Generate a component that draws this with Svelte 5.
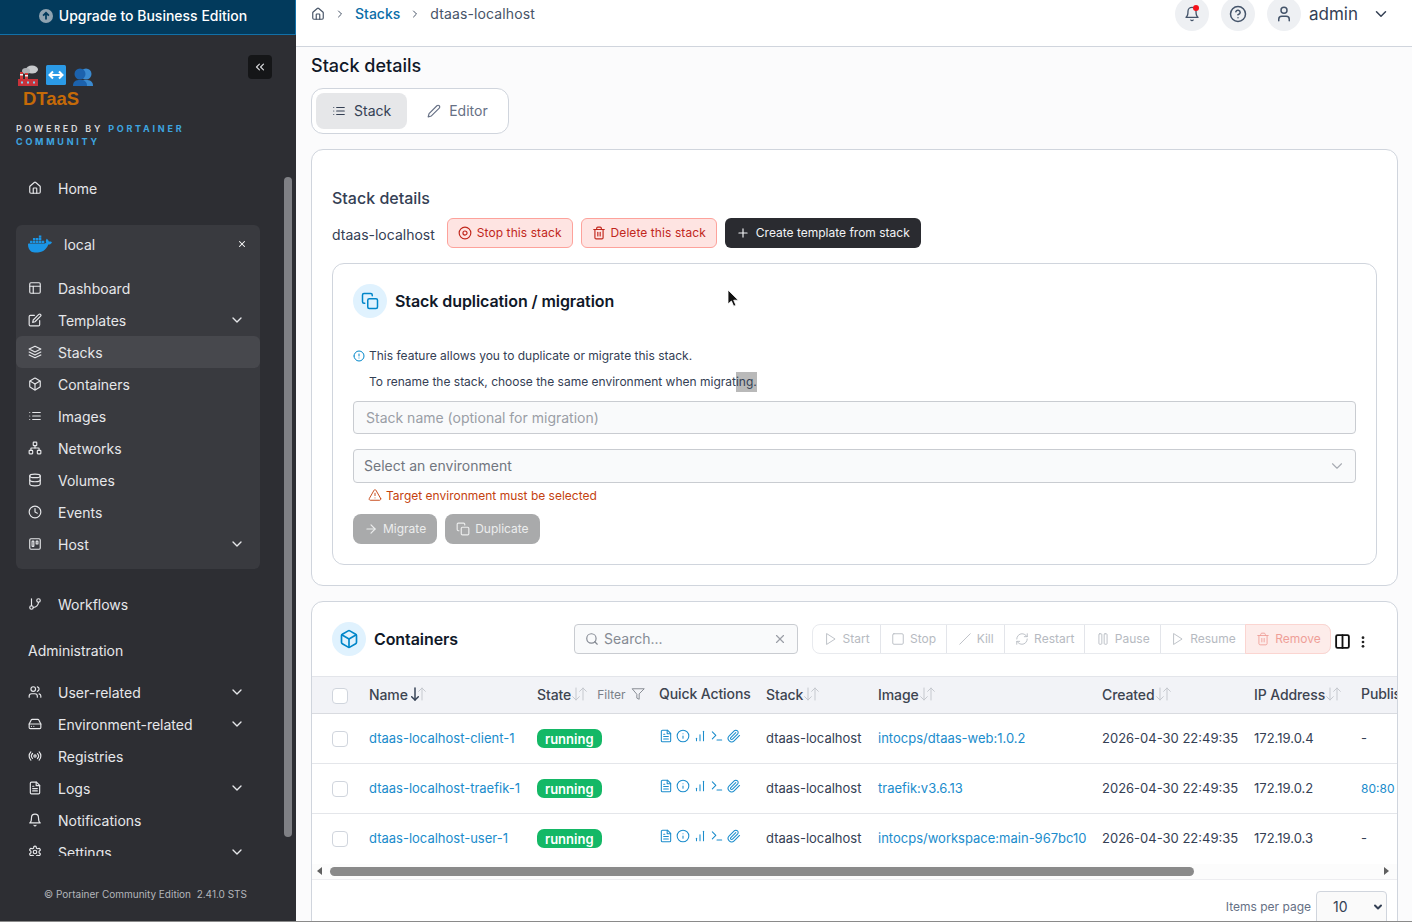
<script lang="ts">
	// circle and rect as path data, so every icon is just a list of d strings
	const c = (x: number, y: number, r: number) =>
		`M${x - r} ${y}a${r} ${r} 0 1 0 ${2 * r} 0a${r} ${r} 0 1 0 ${-2 * r} 0`;
	const r = (x: number, y: number, w: number, h: number, q = 2) =>
		`M${x + q} ${y}h${w - 2 * q}a${q} ${q} 0 0 1 ${q} ${q}v${h - 2 * q}a${q} ${q} 0 0 1 ${-q} ${q}h${-(w - 2 * q)}a${q} ${q} 0 0 1 ${-q} ${-q}v${-(h - 2 * q)}a${q} ${q} 0 0 1 ${q} ${-q}z`;

	const icons: Record<string, string[]> = {
		home: ['M15 21v-8a1 1 0 0 0-1-1h-4a1 1 0 0 0-1 1v8', 'M3 10a2 2 0 0 1 .709-1.528l7-5.999a2 2 0 0 1 2.582 0l7 5.999A2 2 0 0 1 21 10v9a2 2 0 0 1-2 2H5a2 2 0 0 1-2-2z'],
		layout: [r(3, 3, 18, 18), 'M3 9h18', 'M9 21V9'],
		edit: ['M11 4H4a2 2 0 0 0-2 2v14a2 2 0 0 0 2 2h14a2 2 0 0 0 2-2v-7', 'M18.5 2.5a2.121 2.121 0 0 1 3 3L12 15l-4 1 1-4 9.5-9.5z'],
		layers: ['M12 2 2 7l10 5 10-5-10-5z', 'M2 17l10 5 10-5', 'M2 12l10 5 10-5'],
		box: ['M21 8a2 2 0 0 0-1-1.73l-7-4a2 2 0 0 0-2 0l-7 4A2 2 0 0 0 3 8v8a2 2 0 0 0 1 1.73l7 4a2 2 0 0 0 2 0l7-4A2 2 0 0 0 21 16Z', 'm3.3 7 8.7 5 8.7-5', 'M12 22V12'],
		list: ['M8 6h13', 'M8 12h13', 'M8 18h13', 'M3 6h.01', 'M3 12h.01', 'M3 18h.01'],
		network: [r(16, 16, 6, 6, 1), r(2, 16, 6, 6, 1), r(9, 2, 6, 6, 1), 'M5 16v-3a1 1 0 0 1 1-1h12a1 1 0 0 1 1 1v3', 'M12 12V8'],
		database: ['M3 5c0-1.66 4-3 9-3s9 1.34 9 3-4 3-9 3-9-1.34-9-3z', 'M21 12c0 1.66-4 3-9 3s-9-1.34-9-3', 'M3 5v14c0 1.66 4 3 9 3s9-1.34 9-3V5'],
		clock: [c(12, 12, 10), 'M12 6v6l4 2'],
		host: [r(3, 3, 18, 18), r(7, 7, 3, 9, 0.5), r(14, 7, 3, 5, 0.5)],
		branch: ['M6 3v12', c(18, 6, 3), c(6, 18, 3), 'M18 9a9 9 0 0 1-9 9'],
		users: ['M16 21v-2a4 4 0 0 0-4-4H6a4 4 0 0 0-4 4v2', c(9, 7, 4), 'M22 21v-2a4 4 0 0 0-3-3.87', 'M16 3.13a4 4 0 0 1 0 7.75'],
		drive: ['M22 12H2', 'M5.45 5.11 2 12v6a2 2 0 0 0 2 2h16a2 2 0 0 0 2-2v-6l-3.45-6.89A2 2 0 0 0 16.76 4H7.24a2 2 0 0 0-1.79 1.11z', 'M6 16h.01', 'M10 16h.01'],
		radio: ['M4.9 19.1C1 15.2 1 8.8 4.9 4.9', 'M7.8 16.2c-2.3-2.3-2.3-6.1 0-8.5', c(12, 12, 2), 'M16.2 7.8c2.3 2.3 2.3 6.1 0 8.5', 'M19.1 4.9C23 8.8 23 15.1 19.1 19'],
		file: ['M14.5 2H6a2 2 0 0 0-2 2v16a2 2 0 0 0 2 2h12a2 2 0 0 0 2-2V7.5L14.5 2z', 'M14 2v6h6', 'M16 13H8', 'M16 17H8', 'M10 9H8'],
		bell: ['M6 8a6 6 0 0 1 12 0c0 7 3 9 3 9H3s3-2 3-9', 'M10.3 21a1.94 1.94 0 0 0 3.4 0'],
		settings: ['M12.22 2h-.44a2 2 0 0 0-2 2v.18a2 2 0 0 1-1 1.73l-.43.25a2 2 0 0 1-2 0l-.15-.08a2 2 0 0 0-2.73.73l-.22.38a2 2 0 0 0 .73 2.73l.15.1a2 2 0 0 1 1 1.72v.51a2 2 0 0 1-1 1.74l-.15.09a2 2 0 0 0-.73 2.73l.22.38a2 2 0 0 0 2.73.73l.15-.08a2 2 0 0 1 2 0l.43.25a2 2 0 0 1 1 1.73V20a2 2 0 0 0 2 2h.44a2 2 0 0 0 2-2v-.18a2 2 0 0 1 1-1.73l.43-.25a2 2 0 0 1 2 0l.15.08a2 2 0 0 0 2.73-.73l.22-.39a2 2 0 0 0-.73-2.73l-.15-.08a2 2 0 0 1-1-1.74v-.5a2 2 0 0 1 1-1.74l.15-.09a2 2 0 0 0 .73-2.73l-.22-.38a2 2 0 0 0-2.73-.73l-.15.08a2 2 0 0 1-2 0l-.43-.25a2 2 0 0 1-1-1.73V4a2 2 0 0 0-2-2z', c(12, 12, 3)],
		chevron: ['m6 9 6 6 6-6'],
		right: ['m9 18 6-6-6-6'],
		x: ['M18 6 6 18', 'M6 6l12 12'],
		pencil: ['M17 3a2.828 2.828 0 1 1 4 4L7.5 20.5 2 22l1.5-5.5L17 3z'],
		stop: [c(12, 12, 10), c(12, 12, 3.5)],
		trash: ['M3 6h18', 'M19 6v14c0 1-1 2-2 2H7c-1 0-2-1-2-2V6', 'M8 6V4c0-1 1-2 2-2h4c1 0 2 1 2 2v2', 'M10 11v6', 'M14 11v6'],
		plus: ['M12 5v14', 'M5 12h14'],
		copy: [r(9, 9, 13, 13), 'M5 15H4a2 2 0 0 1-2-2V4a2 2 0 0 1 2-2h9a2 2 0 0 1 2 2v1'],
		alert: [c(12, 12, 10), 'M12 8v4', 'M12 16h.01'],
		info: [c(12, 12, 10), 'M12 16v-4', 'M12 8h.01'],
		warn: ['m21.73 18-8-14a2 2 0 0 0-3.48 0l-8 14A2 2 0 0 0 4 21h16a2 2 0 0 0 1.73-3Z', 'M12 9v4', 'M12 17h.01'],
		arrow: ['M5 12h14', 'm12 5 7 7-7 7'],
		search: [c(11, 11, 8), 'm21 21-4.3-4.3'],
		play: ['M5 3l14 9-14 9z'],
		square: [r(3, 3, 18, 18)],
		slash: ['M21 3 3 21'],
		refresh: ['M3 12a9 9 0 0 1 9-9 9.75 9.75 0 0 1 6.74 2.74L21 8', 'M21 3v5h-5', 'M21 12a9 9 0 0 1-9 9 9.75 9.75 0 0 1-6.74-2.74L3 16', 'M8 16H3v5'],
		pause: [r(5, 3, 5, 18, 1.5), r(14, 3, 5, 18, 1.5)],
		columns: [r(3, 3, 18, 18), 'M12 3v18'],
		bars: ['M12 20V10', 'M18 20V4', 'M6 20v-4'],
		terminal: ['m4 17 6-6-6-6', 'M12 19h8'],
		clip: ['m21.44 11.05-9.19 9.19a6 6 0 0 1-8.49-8.49l8.57-8.57A4 4 0 1 1 18 8.84l-8.59 8.57a2 2 0 0 1-2.83-2.83l8.49-8.48'],
		filter: ['M22 3H2l8 9.46V19l4 2v-8.54z'],
		user: ['M19 21v-2a4 4 0 0 0-4-4H9a4 4 0 0 0-4 4v2', c(12, 7, 4)],
		help: [c(12, 12, 10), 'M9.09 9a3 3 0 0 1 5.83 1c0 2-3 3-3 3', 'M12 17h.01'],
		dleft: ['m11 17-5-5 5-5', 'm18 17-5-5 5-5'],
		down: ['M12 3v18', 'm17 16-5 5-5-5'],
		up: ['M12 21V3', 'm7 8 5-5 5 5'],
		external: ['M15 3h6v6', 'M10 14 21 3', 'M18 13v6a2 2 0 0 1-2 2H5a2 2 0 0 1-2-2V8a2 2 0 0 1 2-2h6']
	};

	const docker =
		'M13.983 11.078h2.119a.186.186 0 00.186-.185V9.006a.186.186 0 00-.186-.186h-2.119a.185.185 0 00-.185.185v1.888c0 .102.083.185.185.185m-2.954-5.43h2.118a.186.186 0 00.186-.186V3.574a.186.186 0 00-.186-.185h-2.118a.185.185 0 00-.185.185v1.888c0 .102.082.185.185.185m0 2.716h2.118a.187.187 0 00.186-.186V6.29a.186.186 0 00-.186-.185h-2.118a.185.185 0 00-.185.185v1.887c0 .102.082.185.185.186m-2.93 0h2.12a.186.186 0 00.184-.186V6.29a.185.185 0 00-.185-.185H8.1a.185.185 0 00-.185.185v1.887c0 .102.083.185.185.186m-2.964 0h2.119a.186.186 0 00.185-.186V6.29a.185.185 0 00-.185-.185H5.136a.186.186 0 00-.186.185v1.887c0 .102.084.185.186.186m5.893 2.715h2.118a.186.186 0 00.186-.185V9.006a.186.186 0 00-.186-.186h-2.118a.185.185 0 00-.185.185v1.888c0 .102.082.185.185.185m-2.93 0h2.12a.185.185 0 00.184-.185V9.006a.185.185 0 00-.184-.186h-2.12a.185.185 0 00-.184.185v1.888c0 .102.083.185.185.185m-2.964 0h2.119a.185.185 0 00.185-.185V9.006a.185.185 0 00-.184-.186h-2.12a.186.186 0 00-.186.186v1.887c0 .102.084.185.186.185m-2.92 0h2.12a.185.185 0 00.184-.185V9.006a.185.185 0 00-.184-.186h-2.12a.185.185 0 00-.184.185v1.888c0 .102.082.185.185.185M23.763 9.89c-.065-.051-.672-.51-1.954-.51-.338.001-.676.03-1.01.087-.248-1.7-1.653-2.53-1.716-2.566l-.344-.199-.226.327c-.284.438-.49.922-.612 1.43-.23.97-.09 1.882.403 2.661-.595.332-1.55.413-1.744.42H.751a.751.751 0 00-.75.748 11.376 11.376 0 00.692 4.062c.545 1.428 1.355 2.48 2.41 3.124 1.18.723 3.1 1.137 5.275 1.137.983.003 1.963-.086 2.93-.266a12.248 12.248 0 003.823-1.389c.98-.567 1.86-1.288 2.61-2.136 1.252-1.418 1.998-2.997 2.553-4.4h.221c1.372 0 2.215-.549 2.68-1.009.309-.293.55-.65.707-1.046l.098-.288Z';

	const envNav = [
		{ label: 'Dashboard', icon: 'layout' },
		{ label: 'Templates', icon: 'edit', more: true },
		{ label: 'Stacks', icon: 'layers', active: true },
		{ label: 'Containers', icon: 'box' },
		{ label: 'Images', icon: 'list' },
		{ label: 'Networks', icon: 'network' },
		{ label: 'Volumes', icon: 'database' },
		{ label: 'Events', icon: 'clock' },
		{ label: 'Host', icon: 'host', more: true }
	];
	const adminNav = [
		{ label: 'User-related', icon: 'users', more: true },
		{ label: 'Environment-related', icon: 'drive', more: true },
		{ label: 'Registries', icon: 'radio' },
		{ label: 'Logs', icon: 'file', more: true },
		{ label: 'Notifications', icon: 'bell' },
		{ label: 'Settings', icon: 'settings', more: true }
	];
	const actions = [
		{ label: 'Start', icon: 'play' },
		{ label: 'Stop', icon: 'square' },
		{ label: 'Kill', icon: 'slash' },
		{ label: 'Restart', icon: 'refresh' },
		{ label: 'Pause', icon: 'pause' },
		{ label: 'Resume', icon: 'play' },
		{ label: 'Remove', icon: 'trash', danger: true }
	];
	const columns = [
		{ label: 'Stack', w: 112 },
		{ label: 'Image', w: 224 },
		{ label: 'Created', w: 152 },
		{ label: 'IP Address', w: 107 }
	];
	const rows = [
		{ name: 'dtaas-localhost-client-1', image: 'intocps/dtaas-web:1.0.2', ip: '172.19.0.4', port: '-' },
		{ name: 'dtaas-localhost-traefik-1', image: 'traefik:v3.6.13', ip: '172.19.0.2', port: '80:80' },
		{ name: 'dtaas-localhost-user-1', image: 'intocps/workspace:main-967bc10', ip: '172.19.0.3', port: '-' }
	];
</script>

{#snippet icon(name, size = 16, width = 2)}
	<svg class="icon" viewBox="0 0 24 24" width={size} height={size} stroke-width={width}>
		{#each icons[name] as d}<path {d} />{/each}
	</svg>
{/snippet}

{#snippet navRow(item)}
	<div class="nav-row" class:active={item.active}>
		{@render icon(item.icon, 14)}
		<span>{item.label}</span>
		{#if item.more}<span class="more">{@render icon('chevron', 16)}</span>{/if}
	</div>
{/snippet}

{#snippet sortable(label, first = false)}
	<span class="th-label">{label}</span><span class="sort" class:first>{@render icon('down', 16, first ? 2.2 : 1.5)}{@render icon('up', 16, 1.5)}</span>
{/snippet}

<div class="page">
	<aside class="sidebar">
		<div class="upgrade">
			<svg class="upgrade-icon" viewBox="0 0 24 24" width="14" height="14">
				<circle cx="12" cy="12" r="12" fill="#8fa3b1" />
				<path d="M12 18V7M7 11.5 12 6.5l5 5" fill="none" stroke="#023a5c" stroke-width="3" />
			</svg>
			Upgrade to Business Edition
		</div>

		<div class="brand">
			<div class="logo">
				<svg viewBox="0 0 76 22" width="76" height="22">
					<ellipse cx="15" cy="4.5" rx="6" ry="4" fill="#c7c9cc" />
					<ellipse cx="9" cy="6" rx="4" ry="3" fill="#aeb1b5" />
					<rect x="3" y="7" width="3" height="9" fill="#d23b3b" />
					<rect x="8" y="8" width="3" height="8" fill="#d23b3b" />
					<rect x="3" y="9" width="3" height="1.5" fill="#eee" />
					<rect x="8" y="10" width="3" height="1.5" fill="#eee" />
					<rect x="1" y="14" width="20" height="7" fill="#c9323a" />
					<rect x="4" y="16.5" width="2" height="2" fill="#7fd0ef" />
					<rect x="10" y="16.5" width="2" height="2" fill="#7fd0ef" />
					<rect x="16" y="16.5" width="2" height="2" fill="#7fd0ef" />
					<rect x="29" y="0" width="20" height="20" rx="1.5" fill="#2b9ae6" />
					<path d="M32.5 10h13M36 6.5 32.5 10l3.5 3.5M42 6.5l3.5 3.5-3.5 3.5" fill="none" stroke="#fff" stroke-width="2" />
					<circle cx="69" cy="9" r="5.5" fill="#3a8ad0" />
					<path d="M62 21c0-5 3-6 7-6s7 1 7 6z" fill="#3a8ad0" />
					<circle cx="63" cy="9" r="5.5" fill="#1c62ad" />
					<path d="M56 21c0-5 3-6 7-6s7 1 7 6z" fill="#1c62ad" />
				</svg>
				<div class="dtaas">DTaaS</div>
			</div>
			<button class="collapse" aria-label="Collapse">{@render icon('dleft', 14)}</button>
		</div>
		<div class="powered">POWERED BY <b>PORTAINER</b> <b>COMMUNITY</b></div>

		<div class="side-scroll">
			<nav>
				<div class="nav-row home">
					{@render icon('home', 14)}
					<span>Home</span>
				</div>

				<div class="env">
					<div class="env-head">
						<svg class="whale" viewBox="0 0 24 24" width="24" height="24"><path d={docker} /></svg>
						<span>local</span>
						<span class="env-close">{@render icon('x', 10, 2.5)}</span>
					</div>
					{#each envNav as item}
						{@render navRow(item)}
					{/each}
				</div>

				<div class="nav-row workflows">
					{@render icon('branch', 14)}
					<span>Workflows</span>
				</div>

				<div class="admin-title">Administration</div>
				{#each adminNav as item}
					{@render navRow(item)}
				{/each}
			</nav>
			<div class="thumb"></div>
		</div>

		<div class="side-foot">© Portainer Community Edition&nbsp; 2.41.0 STS</div>
	</aside>

	<main>
		<header class="topbar">
			<div class="crumbs">
				{@render icon('home', 14)}
				<span class="sep">{@render icon('right', 12)}</span>
				<a href="#stacks">Stacks</a>
				<span class="sep">{@render icon('right', 12)}</span>
				<span class="crumb-last">dtaas-localhost</span>
			</div>
			<div class="top-actions">
				<span class="round bell">{@render icon('bell', 16)}<i></i></span>
				<span class="round">{@render icon('help', 18)}</span>
				<span class="round">{@render icon('user', 18)}</span>
				<span class="who">admin</span>
				<span class="who-more">{@render icon('chevron', 18)}</span>
			</div>
		</header>

		<div class="content">
			<h1>Stack details</h1>

			<div class="tabs">
				<div class="tab on">{@render icon('list', 14)}<span>Stack</span></div>
				<div class="tab">{@render icon('pencil', 14)}<span>Editor</span></div>
			</div>

			<section class="card details">
				<h2>Stack details</h2>
				<div class="stack-row">
					<span class="stack-name">dtaas-localhost</span>
					<button class="btn light-red">{@render icon('stop', 14)}Stop this stack</button>
					<button class="btn light-red">{@render icon('trash', 14)}Delete this stack</button>
					<button class="btn dark">{@render icon('plus', 14)}Create template from stack</button>
				</div>

				<div class="card inner">
					<div class="card-title">
						<span class="badge-icon">{@render icon('copy', 18)}</span>
						<h3>Stack duplication / migration</h3>
					</div>
					<p class="note first"><span class="note-icon">{@render icon('alert', 12)}</span>This feature allows you to duplicate or migrate this stack.</p>
					<p class="note second">To rename the stack, choose the same environment when migrat<span class="sel">ing.</span></p>
					<div class="field stack-input"><span>Stack name (optional for migration)</span></div>
					<div class="field env-select"><span>Select an environment</span><span class="select-more">{@render icon('chevron', 18, 1.5)}</span></div>
					<p class="error">{@render icon('warn', 14, 1.6)}Target environment must be selected</p>
					<div class="form-btns">
						<button class="btn off">{@render icon('arrow', 14)}Migrate</button>
						<button class="btn off">{@render icon('copy', 14)}Duplicate</button>
					</div>
				</div>
			</section>

			<section class="card containers">
				<div class="table-head">
					<span class="badge-icon">{@render icon('box', 20)}</span>
					<h3>Containers</h3>
					<div class="search">
						{@render icon('search', 14)}
						<span class="search-text">Search...</span>
						<span class="search-x">{@render icon('x', 14)}</span>
					</div>
					<div class="actions">
						{#each actions as a}
							<span class="action" class:danger={a.danger}>{@render icon(a.icon, 14, 1.5)}{a.label}</span>
						{/each}
					</div>
					<span class="cols">{@render icon('columns', 17, 2.6)}</span>
					<svg class="kebab" viewBox="0 0 4 14" width="4" height="12"><circle cx="2" cy="2" r="1.6" /><circle cx="2" cy="7" r="1.6" /><circle cx="2" cy="12" r="1.6" /></svg>
				</div>

				<div class="table-wrap">
					<table>
						<colgroup>
							<col style="width:49px" /><col style="width:168px" /><col style="width:122px" /><col style="width:107px" />
							{#each columns as col}<col style="width:{col.w}px" />{/each}
							<col style="width:200px" />
						</colgroup>
						<thead>
							<tr>
								<th><span class="check"></span></th>
								<th>{@render sortable('Name', true)}</th>
								<th>{@render sortable('State')}<span class="filter">Filter{@render icon('filter', 14, 1.5)}</span></th>
								<th>Quick Actions</th>
								{#each columns as col}
									<th>{@render sortable(col.label)}</th>
								{/each}
								<th>Published Ports</th>
							</tr>
						</thead>
						<tbody>
							{#each rows as row}
								<tr>
									<td><span class="check"></span></td>
									<td><a href="#c">{row.name}</a></td>
									<td><span class="running">running</span></td>
									<td>
										<span class="quick">
											{@render icon('file', 14, 1.8)}{@render icon('info', 14, 1.8)}{@render icon('bars', 14, 1.8)}{@render icon('terminal', 14, 1.8)}{@render icon('clip', 14, 1.8)}
										</span>
									</td>
									<td>dtaas-localhost</td>
									<td><a href="#i">{row.image}</a></td>
									<td>2026-04-30 22:49:35</td>
									<td>{row.ip}</td>
									<td>{#if row.port === '-'}-{:else}<a class="port" href="#p">{row.port}{@render icon('external', 12, 1.8)}</a>{/if}</td>
								</tr>
							{/each}
						</tbody>
					</table>
				</div>

				<div class="hscroll">
					<i class="tri left"></i>
					<div class="hthumb"></div>
					<i class="tri"></i>
				</div>

				<div class="pager">
					<span>Items per page</span>
					<div class="per-page"><span>10</span><svg viewBox="0 0 24 24" width="12" height="12" class="icon" stroke-width="4"><path d="m6 9 6 6 6-6" /></svg></div>
				</div>
			</section>
		</div>
	</main>

	<svg class="cursor" viewBox="0 0 12 19" width="12" height="19">
		<path d="M1 1v14l3.4-3 2.3 5.2 2.2-1-2.2-5h4.6z" fill="#111" stroke="#fff" stroke-width="0.8" />
	</svg>
</div>

<style>
	:global(body) {
		margin: 0;
		background: #fff;
	}
	.page {
		position: relative;
		display: flex;
		height: 921px;
		border-bottom: 1px solid #8a8a8a;
		overflow: hidden;
		font-family: Inter, 'Liberation Sans', sans-serif;
		font-size: 14px;
		color: #344054;
	}
	.icon {
		flex: none;
		fill: none;
		stroke: currentColor;
		stroke-linecap: round;
		stroke-linejoin: round;
	}
	p,
	h1,
	h2,
	h3 {
		margin: 0;
	}
	a {
		text-decoration: none;
		color: #1a8ccc;
	}
	button {
		font: inherit;
	}

	/* sidebar */
	.sidebar {
		flex: none;
		width: 296px;
		display: flex;
		flex-direction: column;
		background: #2d2e33;
		color: #e6e7ea;
	}
	.upgrade {
		height: 35px;
		box-sizing: border-box;
		display: flex;
		align-items: center;
		justify-content: center;
		gap: 6px;
		background: #023a5c;
		border-bottom: 1px solid #1170a8;
		border-right: 1px solid #1170a8;
		color: #fff;
		font-weight: 500;
		padding-bottom: 3px;
		padding-right: 9px;
	}
	.brand {
		display: flex;
		justify-content: space-between;
		align-items: flex-start;
		padding: 20px 24px 0 17px;
	}
	.logo {
		margin-top: 10px;
	}
	.logo svg {
		display: block;
	}
	.dtaas {
		font-family: 'Liberation Sans', sans-serif;
		font-weight: 700;
		font-size: 18.5px;
		line-height: 21px;
		color: #c56a08;
		margin-left: 6px;
		padding-top: 1px;
	}
	.collapse {
		width: 24px;
		height: 24px;
		padding: 0;
		border: 0;
		border-radius: 4px;
		background: #151618;
		color: #d8d9dc;
		display: flex;
		align-items: center;
		justify-content: center;
	}
	.powered {
		margin: 13px 0 0 16px;
		width: 190px;
		font-size: 9px;
		line-height: 13px;
		font-weight: 600;
		letter-spacing: 2.75px;
		color: #d9dadd;
	}
	.powered b {
		font-weight: 700;
		color: #3ea6e0;
	}
	.side-scroll {
		flex: 1;
		min-height: 0;
		display: flex;
		margin-top: 24px;
	}
	nav {
		flex: 1;
		min-width: 0;
		overflow: hidden;
		padding: 0 24px 0 16px;
		height: 684px;
	}
	.thumb {
		flex: none;
		width: 8px;
		height: 660px;
		margin: 5px 4px 0 0;
		border-radius: 4px;
		background: #7f8085;
	}
	.nav-row {
		height: 32px;
		display: flex;
		align-items: center;
		gap: 16px;
		padding: 0 12px;
		border-radius: 6px;
	}
	.more {
		margin-left: auto;
		display: flex;
		margin-right: 3px;
	}
	.nav-row.active {
		background: #47484d;
	}
	.env {
		margin-top: 21px;
		padding-bottom: 9px;
		background: #393a3f;
		border-radius: 6px;
	}
	.env-head {
		height: 40px;
		box-sizing: border-box;
		display: flex;
		align-items: center;
		padding: 0 13px 2px 12px;
		margin-bottom: 7px;
		gap: 12px;
	}
	.whale {
		fill: #1a95e6;
	}
	.env-close {
		margin-left: auto;
		display: flex;
		color: #fff;
	}
	.workflows {
		margin-top: 19px;
	}
	.admin-title {
		padding: 0 12px;
		margin-top: 15px;
		margin-bottom: 9px;
		height: 32px;
		line-height: 32px;
	}
	.side-foot {
		height: 51px;
		box-sizing: border-box;
		padding: 18px 5px 0 0;
		text-align: center;
		font-size: 10px;
		color: #b4b6bb;
		white-space: nowrap;
	}

	/* main */
	main {
		flex: 1;
		min-width: 0;
		background: #fbfbfc;
	}
	.topbar {
		height: 46px;
		border-bottom: 1px solid #d0d5dd;
		background: #fff;
		display: flex;
		align-items: flex-start;
		justify-content: space-between;
		padding: 0 15px;
		overflow: hidden;
	}
	.crumbs {
		display: flex;
		align-items: center;
		height: 27px;
		gap: 6px;
		color: #475467;
	}
	.crumbs a {
		color: #0b6ea8;
		font-weight: 500;
	}
	.crumb-last {
		letter-spacing: 0.13px;
	}
	.sep {
		display: flex;
		margin: 0 3px;
	}
	.top-actions {
		display: flex;
		align-items: center;
		margin-top: -3px;
		height: 34px;
		gap: 12px;
	}
	.round {
		position: relative;
		width: 34px;
		height: 34px;
		border-radius: 50%;
		background: #eef0f3;
		display: flex;
		align-items: center;
		justify-content: center;
		color: #44546a;
	}
	.bell i {
		position: absolute;
		top: 8px;
		right: 10px;
		width: 6px;
		height: 6px;
		border-radius: 50%;
		background: #f5121b;
	}
	.who {
		font-size: 17px;
		margin-left: -4px;
		color: #344054;
	}
	.who-more {
		display: flex;
		margin: 0 7px 0 2px;
		color: #344054;
	}
	.content {
		padding: 9px 14px 0 15px;
	}
	h1 {
		font-size: 18px;
		line-height: 20px;
		font-weight: 500;
		color: #101828;
	}
	.tabs {
		margin-top: 12px;
		width: 198px;
		height: 46px;
		box-sizing: border-box;
		padding: 4px;
		display: flex;
		border: 1px solid #d0d5dd;
		border-radius: 12px;
		background: #fff;
	}
	.tab {
		height: 36px;
		display: flex;
		align-items: center;
		gap: 8px;
		padding: 0 16px;
		border-radius: 8px;
		color: #667085;
	}
	.tab span {
		padding-bottom: 2px;
	}
	.tab.on {
		background: #e6e7e9;
		color: #344054;
		margin-right: 4px;
	}
	.card {
		box-sizing: border-box;
		background: #fff;
		border: 1px solid #d0d5dd;
		border-radius: 12px;
	}
	.details {
		margin-top: 15px;
		padding: 38px 20px 20px;
	}
	h2 {
		font-size: 16px;
		line-height: 20px;
		font-weight: 500;
		color: #344054;
	}
	.stack-row {
		margin-top: 10px;
		display: flex;
		align-items: center;
		gap: 8px;
	}
	.stack-name {
		margin-right: 4px;
		padding-top: 2px;
	}
	.btn {
		height: 30px;
		box-sizing: border-box;
		display: inline-flex;
		align-items: center;
		gap: 5px;
		padding: 0 10px 1px;
		font-size: 12px;
		border-radius: 6px;
		border: 1px solid transparent;
	}
	.light-red {
		background: #fee4e2;
		border-color: #fda29b;
		color: #c1271c;
		letter-spacing: 0.08px;
	}
	.dark {
		background: #2a2b30;
		color: #f2f3f5;
		padding: 0 10px 1px;
		gap: 6px;
	}
	.off {
		background: #a9aaab;
		color: #eceded;
		border-radius: 8px;
	}
	.inner {
		margin-top: 15px;
		padding: 20px;
		height: 302px;
	}
	.card-title {
		display: flex;
		align-items: center;
		gap: 8px;
	}
	h3 {
		font-size: 16px;
		font-weight: 600;
		letter-spacing: -0.08px;
		color: #101828;
	}
	.badge-icon {
		flex: none;
		width: 34px;
		height: 34px;
		border-radius: 50%;
		background: #e0f2fe;
		color: #0086c9;
		display: flex;
		align-items: center;
		justify-content: center;
	}
	.note {
		font-size: 12px;
		line-height: 20px;
		color: #344054;
		display: flex;
		align-items: center;
	}
	.note.first {
		margin-top: 28px;
	}
	.note.second {
		margin-top: 6px;
		padding-left: 16px;
		white-space: pre;
	}
	.note-icon {
		display: flex;
		width: 16px;
		color: #0086c9;
	}
	.sel {
		background: #b9b9b9;
	}
	.field {
		box-sizing: border-box;
		display: flex;
		align-items: center;
		background: #f9fafb;
		border: 1px solid #c9ccd1;
		border-radius: 4px;
		color: #9a9ea6;
	}
	.stack-input {
		margin-top: 9px;
		height: 33px;
		padding: 0 12px;
	}
	.env-select {
		margin-top: 15px;
		height: 34px;
		padding: 0 9px 0 10px;
		color: #71767f;
	}
	.env-select > span:first-child {
		padding-bottom: 2px;
	}
	.select-more {
		margin-left: auto;
		display: flex;
		color: #a8acb3;
	}
	.error {
		margin-top: 2px;
		height: 20px;
		padding-left: 15px;
		display: flex;
		align-items: center;
		gap: 4px;
		font-size: 12px;
		color: #c4420f;
	}
	.form-btns {
		margin-top: 9px;
		display: flex;
		gap: 8px;
	}
	.containers {
		margin-top: 15px;
		padding-top: 20px;
		height: 340px;
	}
	.table-head {
		display: flex;
		align-items: center;
		height: 34px;
		padding-left: 20px;
	}
	.table-head h3 {
		margin-left: 8px;
		width: 200px;
	}
	.search {
		box-sizing: border-box;
		width: 224px;
		height: 30px;
		display: flex;
		align-items: center;
		gap: 5px;
		padding: 0 10px;
		background: #f9fafb;
		border: 1px solid #c9ccd1;
		border-radius: 4px;
		color: #858a93;
	}
	.search-text {
		padding-bottom: 2px;
	}
	.search-x {
		margin-left: auto;
		display: flex;
		color: #9a9ea6;
	}
	.actions {
		margin-left: 14px;
		display: flex;
		height: 30px;
		border: 1px solid #e8eaee;
		border-radius: 8px;
		font-size: 12px;
		color: #b6bac1;
		box-sizing: border-box;
	}
	.action {
		display: flex;
		align-items: center;
		gap: 5px;
		padding: 0 10px 1px 10.5px;
		border-left: 1px solid #e3e5ea;
	}
	.action:first-child {
		border-left: 0;
	}
	.action.danger {
		background: #fdecea;
		color: #ef9f98;
		border: 1px solid #fbd5d1;
		margin: -1px;
		border-radius: 0 8px 8px 0;
		padding-right: 9.5px;
	}
	.cols {
		display: flex;
		margin: 4px 0 0 3px;
		color: #111;
	}
	.kebab {
		margin-left: 10px;
		margin-top: 5px;
		fill: #222;
	}
	.table-wrap {
		margin-top: 20px;
		overflow: hidden;
	}
	table {
		table-layout: fixed;
		width: 1241px;
		border-collapse: collapse;
		white-space: nowrap;
		font-size: 13px;
	}
	th,
	td {
		padding: 0 0 1px 8px;
		overflow: hidden;
		text-align: left;
	}
	th:first-child,
	td:first-child {
		padding: 1px 0 0 20px;
	}
	thead tr {
		height: 37px;
		background: #f2f3f7;
		border-top: 1px solid #e3e5ea;
		border-bottom: 1px solid #d9dbe0;
	}
	th {
		font-size: 14px;
		font-weight: 500;
		letter-spacing: -0.1px;
		color: #3d4450;
		padding-bottom: 3px;
	}
	tbody tr {
		height: 50px;
		border-bottom: 1px solid #e4e6ea;
	}
	tbody tr:last-child {
		border-bottom: 0;
	}
	td {
		color: #344054;
	}
	.port {
		font-size: 12px;
		display: inline-flex;
		gap: 2px;
		align-items: center;
	}
	.check {
		display: block;
		width: 14px;
		height: 14px;
		background: #fff;
		border: 1px solid #d0d5dd;
		border-radius: 4px;
	}
	.th-label {
		vertical-align: middle;
	}
	.sort {
		display: inline-flex;
		vertical-align: middle;
		margin-left: -3px;
		color: #c6c9cf;
	}
	.sort :global(svg + svg) {
		margin-left: -9px;
	}
	.sort.first {
		margin-left: -1px;
	}
	.sort.first :global(svg:first-child) {
		color: #344054;
	}
	.filter {
		display: inline-flex;
		align-items: center;
		gap: 5px;
		margin-left: 6px;
		font-size: 12px;
		font-weight: 400;
		letter-spacing: 0;
		color: #7a7f88;
		vertical-align: middle;
	}
	.running {
		display: inline-block;
		height: 19px;
		line-height: 20px;
		padding: 0 8px;
		border-radius: 7px;
		background: #14b866;
		color: #fff;
		font-weight: 600;
	}
	.quick {
		display: inline-flex;
		gap: 3px;
		color: #1a8ccc;
		transform: translateY(-1px);
	}
	.hscroll {
		height: 15px;
		display: flex;
		align-items: center;
		background: #fcfcfc;
		border-bottom: 1px solid #ededf0;
		padding: 0 8px 0 5px;
		gap: 8px;
	}
	.hthumb {
		width: 864px;
		height: 9px;
		border-radius: 5px;
		background: #8a8a8a;
	}
	.tri {
		width: 0;
		height: 0;
		margin-left: auto;
		border-left: 5px solid #606060;
		border-top: 4px solid transparent;
		border-bottom: 4px solid transparent;
	}
	.tri.left {
		margin-left: 0;
		border-left: 0;
		border-right: 5px solid #606060;
	}
	.pager {
		display: flex;
		align-items: center;
		justify-content: flex-end;
		gap: 5px;
		padding: 11px 10px 0 0;
		font-size: 12px;
		color: #667085;
	}
	.pager > span {
		padding-bottom: 4px;
	}
	.per-page {
		box-sizing: border-box;
		width: 71px;
		height: 36px;
		display: flex;
		align-items: center;
		justify-content: space-between;
		padding: 0 2px 4px 16px;
		border: 1px solid #d0d5dd;
		border-radius: 4px;
		background: #fafafa;
		font-size: 14px;
		color: #344054;
	}
	.cursor {
		position: absolute;
		left: 727px;
		top: 289px;
	}
</style>
